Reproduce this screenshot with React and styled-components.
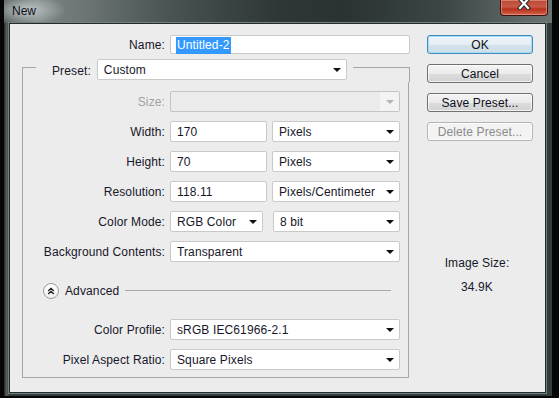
import React from 'react';
import styled, { createGlobalStyle } from 'styled-components';

const GlobalStyle = createGlobalStyle`
  html, body {
    margin: 0;
    padding: 0;
    background: #060606;
    overflow: hidden;
  }
  * {
    box-sizing: border-box;
  }
`;

const Window = styled.div`
  margin-left: 4px;
  width: 548px;
  height: 396px;
  display: flex;
  flex-direction: column;
  background: #384242;
  border-radius: 0 0 6px 6px;
  font-family: 'Liberation Sans', Arial, sans-serif;
  font-size: 12px;
  letter-spacing: 0.12px;
  color: #17172a;
`;

const TitleBar = styled.div`
  height: 23px;
  flex: none;
  display: flex;
  align-items: flex-start;
  justify-content: space-between;
  padding: 0 4px 0 8px;
  background:
    radial-gradient(ellipse 40px 16px at 22px 10px, rgba(205, 212, 212, 0.85), rgba(205, 212, 212, 0) 100%),
    linear-gradient(90deg, #4c5454 0%, #7a8282 6%, #6e7676 14%, #4a5454 30%, #2e3636 50%, #2a3232 62%, #3c4646 80%, #5e6666 94%, #6a7272 100%);
`;

const Title = styled.span`
  margin-top: 4px;
  color: #0c0c1a;
  font-size: 12px;
  letter-spacing: 0;
`;

const CloseButton = styled.div`
  width: 48px;
  height: 16px;
  display: flex;
  align-items: flex-start;
  justify-content: center;
  border: 1px solid #3a1410;
  border-top: none;
  border-radius: 0 0 4px 4px;
  background: linear-gradient(180deg, #b84a38 0%, #c85a46 45%, #b8301c 60%, #d0644a 100%);
  box-shadow: inset 0 0 0 1px rgba(255, 190, 170, 0.45);
`;

const Frame = styled.div`
  flex: 1;
  display: flex;
  padding: 0 6px 3px 5px;
  background: linear-gradient(90deg, #1c2222 0%, #56605f 40%, #2c3434 100%);
  background-size: 6px 100%;
  background-repeat: no-repeat;
  background-color: #323c3c;
`;

const Client = styled.div`
  flex: 1;
  display: flex;
  gap: 17px;
  padding-top: 11px;
  background: #ececec;
  border: 1px solid #222c2c;
  box-shadow: 0 0 0 1px #738080;
`;

const LeftCol = styled.div`
  width: 400px;
  display: flex;
  flex-direction: column;
`;

const RightCol = styled.div`
  width: 106px;
  display: flex;
  flex-direction: column;
  align-items: center;
`;

const Row = styled.div`
  display: flex;
  align-items: center;
  height: ${p => p.h || 21}px;
  margin-top: ${p => p.mt || 0}px;
`;

const Label = styled.span`
  width: ${p => p.w}px;
  padding-right: 5px;
  text-align: right;
  white-space: nowrap;
  color: ${p => (p.disabled ? '#a2a2a2' : '#17172a')};
`;

const Field = styled.div`
  width: ${p => p.w}px;
  height: ${p => p.h || 21}px;
  margin-left: ${p => p.ml || 0}px;
  display: flex;
  align-items: center;
  padding: 1px 5px 0 6px;
  background: #ffffff;
  border: 1px solid #c9c9c9;
  border-radius: 2px;
  white-space: nowrap;
`;

const Selected = styled.span`
  background: #3399ff;
  color: #ffffff;
  margin-left: -1px;
  padding: 1px 1px 2px;
`;

const Value = styled.span`
  flex: 1;
`;

const Arrow = styled.span`
  width: 0;
  height: 0;
  border-left: 4px solid transparent;
  border-right: 4px solid transparent;
  border-top: 4px solid ${p => (p.disabled ? '#b4b4b4' : '#101010')};
`;

const DisabledSelect = styled.div`
  width: 230px;
  height: 21px;
  display: flex;
  background: #ebebeb;
  border: 1px solid #c4c4c4;
  border-radius: 2px;
`;

const DisabledArrowBox = styled.div`
  width: 19px;
  margin-left: auto;
  display: flex;
  align-items: center;
  justify-content: center;
  background: #f3f3f3;
`;

const GroupHeader = styled.div`
  display: flex;
  align-items: flex-start;
  height: 23px;
  margin: 5px 0 0 12px;
`;

const HeaderEdge = styled.div`
  height: 15px;
  margin-top: 8px;
  border-top: 1px solid #a6a6a6;
  ${p => (p.side === 'left'
    ? 'width: 14px; border-left: 1px solid #a6a6a6;'
    : 'flex: 1; margin-left: 6px; border-right: 1px solid #a6a6a6;')}
`;

const PresetLabel = styled.span`
  margin: 5px 6px 0 16px;
`;

const GroupBody = styled.div`
  margin-left: 12px;
  width: 387px;
  padding: 9px 8px 7px 0;
  border: 1px solid #a6a6a6;
  border-top: none;
  display: flex;
  flex-direction: column;
`;

const AdvancedRow = styled.div`
  display: flex;
  align-items: center;
  height: 17px;
  margin-top: 20px;
  padding-left: 20px;
`;

const AdvancedIcon = styled.div`
  width: 16px;
  height: 16px;
  border-radius: 50%;
  border: 1px solid #9a9a9a;
  background: linear-gradient(180deg, #ffffff, #f0f0f0);
  display: flex;
  align-items: center;
  justify-content: center;
`;

const AdvancedText = styled.span`
  margin-left: 6px;
`;

const Rule = styled.div`
  flex: 1;
  height: 1px;
  margin: 0 9px 0 6px;
  background: #a8a8a8;
`;

const Button = styled.div`
  width: 106px;
  height: 19px;
  margin-top: ${p => p.mt || 0}px;
  display: flex;
  align-items: center;
  justify-content: center;
  border-radius: 3px;
  border: 1px solid ${p => (p.primary ? '#3c8cc4' : p.disabled ? '#b2b6b8' : '#707070')};
  background: ${p => (p.disabled
    ? '#f3f3f3'
    : p.primary
      ? 'linear-gradient(180deg, #f0f6fa 0%, #e4eef4 50%, #d4e2ea 51%, #cfdde6 100%)'
      : 'linear-gradient(180deg, #f4f4f4 0%, #ebebeb 50%, #dddddd 51%, #d2d2d2 100%)')};
  box-shadow: ${p => (p.primary ? 'inset 0 0 0 1px #a8dcf4' : 'inset 0 0 0 1px rgba(255,255,255,0.7)')};
  color: ${p => (p.disabled ? '#8a8a8a' : '#101020')};
`;

const InfoText = styled.div`
  margin-top: ${p => p.mt}px;
  line-height: 14px;
  margin-left: -6px;
`;

const Select = ({ w, ml, children }) => (
  <Field w={w} ml={ml}>
    <Value>{children}</Value>
    <Arrow />
  </Field>
);

const FormRow = ({ label, mt, children, disabled }) => (
  <Row mt={mt}>
    <Label w={147} disabled={disabled}>{label}</Label>
    {children}
  </Row>
);

export default function App() {
  return (
    <>
      <GlobalStyle />
      <Window>
        <TitleBar>
          <Title>New</Title>
          <CloseButton>
            <svg width="14" height="10" viewBox="0 0 14 10">
              <path d="M3 -1 L11 8 M11 -1 L3 8" stroke="#2a2a2a" strokeWidth="4.2" strokeLinecap="square" />
              <path d="M3 -1 L11 8 M11 -1 L3 8" stroke="#ffffff" strokeWidth="2.2" strokeLinecap="square" />
            </svg>
          </CloseButton>
        </TitleBar>
        <Frame>
          <Client>
            <LeftCol>
              <Row h={19}>
                <Label w={160}>Name:</Label>
                <Field w={240} h={19}>
                  <Selected>Untitled-2</Selected>
                </Field>
              </Row>

              <GroupHeader>
                <HeaderEdge side="left" />
                <PresetLabel>Preset:</PresetLabel>
                <Select w={250}>Custom</Select>
                <HeaderEdge side="right" />
              </GroupHeader>

              <GroupBody>
                <FormRow label="Size:" disabled>
                  <DisabledSelect>
                    <DisabledArrowBox>
                      <Arrow disabled />
                    </DisabledArrowBox>
                  </DisabledSelect>
                </FormRow>
                <FormRow label="Width:" mt={9}>
                  <Field w={97}>170</Field>
                  <Select w={128} ml={5}>Pixels</Select>
                </FormRow>
                <FormRow label="Height:" mt={9}>
                  <Field w={97}>70</Field>
                  <Select w={128} ml={5}>Pixels</Select>
                </FormRow>
                <FormRow label="Resolution:" mt={9}>
                  <Field w={97}>118.11</Field>
                  <Select w={128} ml={5}>Pixels/Centimeter</Select>
                </FormRow>
                <FormRow label="Color Mode:" mt={9}>
                  <Select w={93}>RGB Color</Select>
                  <Select w={127} ml={10}>8 bit</Select>
                </FormRow>
                <FormRow label="Background Contents:" mt={9}>
                  <Select w={230}>Transparent</Select>
                </FormRow>

                <AdvancedRow>
                  <AdvancedIcon>
                    <svg width="8" height="8" viewBox="0 0 8 8">
                      <path d="M1.2 4 L4 1.3 L6.8 4 M1.2 7 L4 4.3 L6.8 7" fill="none" stroke="#1a1a1a" strokeWidth="1.3" />
                    </svg>
                  </AdvancedIcon>
                  <AdvancedText>Advanced</AdvancedText>
                  <Rule />
                </AdvancedRow>

                <FormRow label="Color Profile:" mt={20}>
                  <Select w={230}>sRGB IEC61966-2.1</Select>
                </FormRow>
                <FormRow label="Pixel Aspect Ratio:" mt={9}>
                  <Select w={230}>Square Pixels</Select>
                </FormRow>
              </GroupBody>
            </LeftCol>

            <RightCol>
              <Button primary>OK</Button>
              <Button mt={10}>Cancel</Button>
              <Button mt={10}>Save Preset...</Button>
              <Button mt={10} disabled>Delete Preset...</Button>
              <InfoText mt={115}>Image Size:</InfoText>
              <InfoText mt={10}>34.9K</InfoText>
            </RightCol>
          </Client>
        </Frame>
      </Window>
    </>
  );
}
